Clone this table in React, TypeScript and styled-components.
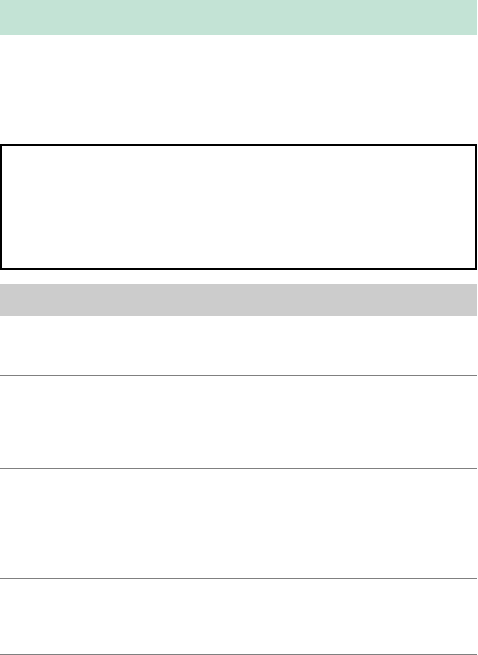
import React from "react";
import styled, { createGlobalStyle } from "styled-components";

const GlobalStyle = createGlobalStyle`
  body {
    margin: 0;
    background: #fff;
    font-family: "Liberation Sans", Arial, sans-serif;
  }
`;

const Page = styled.div`
  width: 477px;
  display: flex;
  flex-direction: column;
`;

const Header = styled.header`
  height: 35px;
  background-color: #c3e3d5;
`;

const Intro = styled.section`
  height: 109px;
`;

const Panel = styled.div`
  box-sizing: border-box;
  height: 126px;
  border: 2px solid #000;
`;

const SectionBar = styled.div`
  margin-top: 14px;
  height: 32px;
  background-color: #cccccc;
`;

const List = styled.ul`
  list-style: none;
  margin: 0;
  padding: 0;
`;

const Item = styled.li<{ $height: number }>`
  height: ${(p) => p.$height}px;
  border-bottom: 1px solid #808080;
`;

const rows = [59, 92, 109, 75];

const App: React.FC = () => {
  return (
    <>
      <GlobalStyle />
      <Page>
        <Header />
        <Intro />
        <Panel />
        <SectionBar />
        <List>
          {rows.map((h, i) => (
            <Item key={i} $height={h} />
          ))}
        </List>
      </Page>
    </>
  );
};

export default App;
